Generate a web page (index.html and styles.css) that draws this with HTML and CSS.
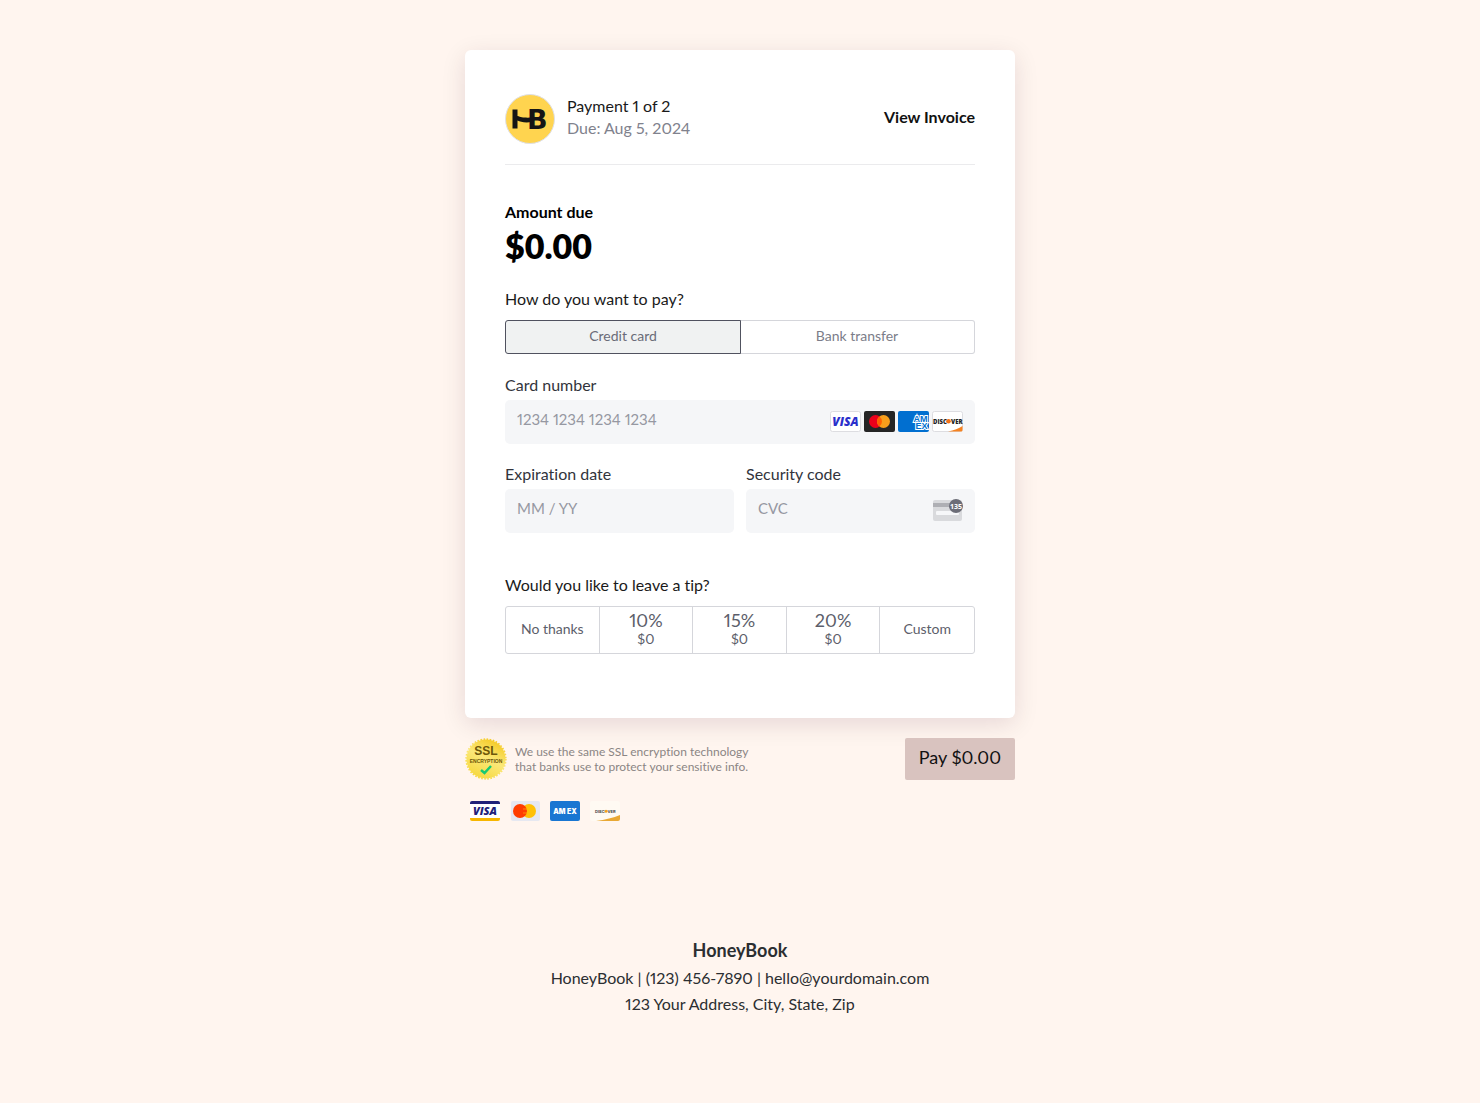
FILE: index.html
```html
<!DOCTYPE html>
<html lang="en">
<head>
<meta charset="utf-8">
<meta name="viewport" content="width=device-width, initial-scale=1">
<title>Payment 1 of 2</title>
<link rel="stylesheet" href="styles.css">
</head>
<body>
<form class="checkout">
  <main class="card">
    <header class="card-header">
      <svg class="logo" viewBox="0 0 50 50" role="img" aria-label="HoneyBook">
        <circle cx="25" cy="25" r="24.5" fill="#ffd44f" stroke="#dfe0e6"/>
        <path d="M7.500 15.500h5v6.500c4 1.200 6 2 15 1.500v4.500c-8 1-12 0-15-1.500v8H7.500z" fill="#151515"/>
        <text class="logo-letter" x="22" y="34.500" fill="#151515">B</text>
      </svg>
      <div class="payment-info">
        <div>Payment 1 of 2</div>
        <div class="due">Due: Aug 5, 2024</div>
      </div>
      <a class="invoice-link" href="#">View Invoice</a>
    </header>

    <section class="amount">
      <h2 class="amount-label">Amount due</h2>
      <p class="amount-value">$0.00</p>
    </section>

    <h3 class="question">How do you want to pay?</h3>
    <div class="methods">
      <button class="method selected" type="button">Credit card</button>
      <button class="method" type="button">Bank transfer</button>
    </div>

    <div class="fields">
      <div class="field wide">
        <label for="number">Card number</label>
        <div class="input-box">
          <input id="number" type="text" placeholder="1234 1234 1234 1234">
          <div class="brands">
            <svg viewBox="0 0 31 21" aria-label="Visa">
              <rect x=".5" y=".5" width="30" height="20" rx="2" fill="#fff" stroke="#dddde1"/>
              <text class="brand-italic" x="15.500" y="15" fill="#2a2fcb">VISA</text>
            </svg>
            <svg viewBox="0 0 31 21" aria-label="Mastercard">
              <rect width="31" height="21" rx="2" fill="#252525"/>
              <circle cx="11.500" cy="10.500" r="6.500" fill="#eb001b"/>
              <circle cx="19.500" cy="10.500" r="6.500" fill="#f79e1b"/>
              <path d="M15.500 5.400a6.500 6.500 0 0 1 0 10.200a6.500 6.500 0 0 1 0-10.200z" fill="#ff5f00"/>
            </svg>
            <svg viewBox="0 0 31 21" aria-label="American Express">
              <rect width="31" height="21" rx="2" fill="#016fd0"/>
              <text class="brand-outline" x="15.500" y="10.500">AM</text>
              <text class="brand-outline" x="17.500" y="18">EX</text>
            </svg>
            <svg viewBox="0 0 31 21" aria-label="Discover">
              <rect x=".5" y=".5" width="30" height="20" rx="2" fill="#fff" stroke="#dddde1"/>
              <path d="M16 20.500Q25 18.500 30.500 15v4q0 1.500-1.500 1.500z" fill="#f58220"/>
              <text class="brand-tiny" x="1" y="12.500" fill="#222">DISC</text>
              <circle cx="16.500" cy="10.300" r="2.300" fill="#f47216"/>
              <text class="brand-tiny" x="19" y="12.500" fill="#222">VER</text>
            </svg>
          </div>
        </div>
      </div>
      <div class="field">
        <label for="expiry">Expiration date</label>
        <div class="input-box"><input id="expiry" type="text" placeholder="MM / YY"></div>
      </div>
      <div class="field">
        <label for="cvc">Security code</label>
        <div class="input-box">
          <input id="cvc" type="text" placeholder="CVC">
          <svg class="cvc-icon" viewBox="0 0 30 22" aria-hidden="true">
            <rect y="1" width="29" height="21" rx="2" fill="#d9dadd"/>
            <rect y="4" width="29" height="4" fill="#aeafb4"/>
            <rect x="3" y="12" width="23" height="4" rx="1" fill="#f6f7f9"/>
            <circle cx="23" cy="7" r="7" fill="#6c6d77"/>
            <text class="cvc-digits" x="23" y="10">135</text>
          </svg>
        </div>
      </div>
    </div>

    <h3 class="question">Would you like to leave a tip?</h3>
    <div class="tips">
      <button class="tip" type="button">No thanks</button>
      <button class="tip" type="button"><span class="percent">10%</span>$0</button>
      <button class="tip" type="button"><span class="percent">15%</span>$0</button>
      <button class="tip" type="button"><span class="percent">20%</span>$0</button>
      <button class="tip" type="button">Custom</button>
    </div>
  </main>

  <div class="actions">
    <svg class="seal" viewBox="0 0 42 42" aria-label="SSL encryption">
      <defs>
        <linearGradient id="gold" x1=".8" y1="0" x2=".3" y2="1">
          <stop offset="0" stop-color="#f4c71d"/>
          <stop offset=".5" stop-color="#fbe878"/>
          <stop offset="1" stop-color="#f6d83e"/>
        </linearGradient>
      </defs>
      <circle cx="21" cy="21" r="19.500" fill="url(#gold)"/>
      <circle cx="21" cy="21" r="19.800" fill="none" stroke="url(#gold)" stroke-width="1.800" stroke-dasharray="1.600 1.510"/>
      <text class="seal-title" x="21" y="17">SSL</text>
      <text class="seal-sub" x="21" y="25">ENCRYPTION</text>
      <path d="M16 32l3.500 3 6.500-7" fill="none" stroke="#18c973" stroke-width="2.500"/>
    </svg>
    <p class="secure-note">We use the same SSL encryption technology<br>that banks use to protect your sensitive info.</p>
    <button class="pay" type="submit">Pay $0.00</button>
  </div>

  <div class="accepted">
    <svg viewBox="0 0 30 20" aria-label="Visa">
      <rect width="30" height="20" rx="2" fill="#fff"/>
      <path d="M0 3V2q0-2 2-2h26q2 0 2 2v1z" fill="#20217a"/>
      <path d="M0 17v1q0 2 2 2h26q2 0 2-2v-1z" fill="#f7b600"/>
      <text class="brand-italic small" x="15" y="14" fill="#20217a">VISA</text>
    </svg>
    <svg viewBox="0 0 30 20" aria-label="Mastercard">
      <rect x="1" width="29" height="20" rx="2" fill="#e6e8f1"/>
      <circle cx="19" cy="10" r="7" fill="#ffc107"/>
      <circle cx="10" cy="10" r="7" fill="#ff3d00"/>
      <path d="M13 8h5M13 12h5" stroke="#ffc107" stroke-width=".6"/>
    </svg>
    <svg viewBox="0 0 30 20" aria-label="American Express">
      <rect width="30" height="20" rx="2" fill="#1976d2"/>
      <text class="brand-amex" x="15" y="12.500">AM EX</text>
    </svg>
    <svg viewBox="0 0 30 20" aria-label="Discover">
      <rect width="30" height="20" rx="2" fill="#fffaf3"/>
      <path d="M6 20Q20 18 30 14v4q0 2-2 2z" fill="#e9a834"/>
      <text class="brand-mini" x="5" y="12" fill="#444">DISC</text>
      <circle cx="16" cy="10.300" r="1.500" fill="#f2a01e"/>
      <text class="brand-mini" x="17.500" y="12" fill="#444">VER</text>
    </svg>
  </div>
</form>

<footer class="company">
  <strong class="company-name">HoneyBook</strong>
  <span>HoneyBook | (123) 456-7890 | hello@yourdomain.com</span>
  <span>123 Your Address, City, State, Zip</span>
</footer>
</body>
</html>
```

FILE: styles.css
```css
* {
  box-sizing: border-box;
}

body {
  margin: 0;
  padding: 50px 16px 84px;
  background: #fff5ef;
  color: #1a1a1a;
  font: 16px/24px Lato, "Open Sans", sans-serif;
  font-variant-ligatures: none;
  font-variant-numeric: proportional-nums;
}

h2, h3, p {
  margin: 0;
}

button, input {
  font: inherit;
  font-variant-ligatures: none;
  font-variant-numeric: proportional-nums;
}

button {
  cursor: pointer;
}

.checkout {
  max-width: 550px;
  margin: 0 auto;
}

.card {
  padding: 44px 40px 64px;
  border-radius: 6px;
  background: #fff;
  box-shadow: 0 6px 24px rgba(60, 10, 40, 0.12);
}

.card-header {
  display: flex;
  align-items: center;
  gap: 12px;
  padding-bottom: 20px;
  border-bottom: 1px solid #ebebed;
  line-height: 22px;
}

.logo {
  width: 50px;
  height: 50px;
}

.logo-letter {
  font: 800 27px "DejaVu Sans", sans-serif;
}

.payment-info {
  flex: 1;
  padding-bottom: 4px;
}

.due {
  color: #80828d;
}

.invoice-link {
  padding-bottom: 4px;
  color: #111;
  font-weight: 700;
  text-decoration: none;
}

.amount {
  padding: 35px 0 19px;
  color: #000;
}

.amount-label {
  font-size: 16px;
  font-weight: 700;
}

.amount-value {
  font-size: 34px;
  font-weight: 800;
  font-variant-numeric: tabular-nums;
  line-height: 44px;
}

.question {
  margin-bottom: 9px;
  font-size: 16px;
  font-weight: 400;
}

.methods {
  display: grid;
  grid-template-columns: 1fr 1fr;
}

.method {
  height: 34px;
  padding: 0 0 2px;
  border: 1px solid #d5d6db;
  border-left: 0;
  border-radius: 0 3px 3px 0;
  background: #fff;
  color: #7b7d89;
  font-size: 14px;
}

.method.selected {
  position: relative;
  margin-right: -1px;
  border: 1px solid #50525f;
  border-radius: 3px 0 0 3px;
  background: #f0f2f2;
  color: #6a6c78;
}

.fields {
  display: grid;
  grid-template-columns: repeat(2, minmax(0, 1fr));
  gap: 18px 12px;
  padding: 19px 0 40px;
}

.wide {
  grid-column: 1 / -1;
}

.field label {
  display: block;
  margin-bottom: 3px;
  color: #32343c;
}

.input-box {
  display: flex;
  align-items: center;
  height: 44px;
  padding: 0 12px 2px;
  border-radius: 5px;
  background: #f5f6f8;
}

.input-box input {
  flex: 1;
  width: 100%;
  min-width: 0;
  padding: 0 0 4px;
  border: 0;
  background: transparent;
  color: #32343c;
}

.input-box input::placeholder {
  color: #9698a2;
  opacity: 1;
  font-size: 15px;
}

.brands {
  display: flex;
  gap: 3px;
}

.brands svg {
  width: 31px;
  height: 21px;
}

.brand-italic {
  font: italic 800 12px "Open Sans", sans-serif;
  text-anchor: middle;
}

.brand-italic.small {
  font-size: 11px;
}

.brand-outline {
  fill: #016fd0;
  stroke: #fff;
  stroke-width: 2px;
  paint-order: stroke;
  font: 700 9px "Liberation Sans", sans-serif;
}

.brand-tiny {
  font: 800 6px "Open Sans", sans-serif;
}

.brand-amex {
  fill: #fff;
  font: 900 7px Inter, sans-serif;
  text-anchor: middle;
}

.brand-mini {
  font: 700 4px Inter, sans-serif;
}

.cvc-icon {
  width: 30px;
  height: 22px;
}

.cvc-digits {
  fill: #fff;
  font: 700 7px "Open Sans", sans-serif;
  text-anchor: middle;
}

.tips {
  display: grid;
  grid-template-columns: repeat(5, 1fr);
  border: 1px solid #d5d6db;
  border-radius: 3px;
}

.tip {
  height: 46px;
  padding: 0 0 2px;
  border: 0;
  background: transparent;
  color: #5c5e6a;
  font-size: 14px;
  line-height: 18px;
}

.tip:not(:last-child) {
  border-right: 1px solid #d5d6db;
}

.percent {
  display: block;
  font-size: 18px;
  line-height: 20px;
}

.actions {
  display: flex;
  align-items: center;
  gap: 8px;
  margin-top: 20px;
}

.seal {
  width: 42px;
  height: 42px;
}

.seal-title {
  fill: #6d5709;
  font: 700 12px "Liberation Sans", sans-serif;
  text-anchor: middle;
}

.seal-sub {
  fill: #6d5709;
  font: 700 5px "Liberation Sans", sans-serif;
  text-anchor: middle;
}

.secure-note {
  flex: 1;
  color: #8b8584;
  font-size: 12px;
  line-height: 15px;
}

.pay {
  height: 42px;
  padding: 0 14px 4px;
  border: 0;
  border-radius: 2px;
  background: #d9c3bf;
  color: #111;
  font-size: 18px;
}

.accepted {
  display: flex;
  gap: 10px;
  padding: 21px 5px 0;
}

.accepted svg {
  width: 30px;
  height: 20px;
}

.company {
  display: flex;
  flex-direction: column;
  align-items: center;
  margin-top: 116px;
  color: #2b2e31;
  line-height: 26px;
  text-align: center;
}

.company-name {
  margin-bottom: 2px;
  font-size: 18px;
}
```
